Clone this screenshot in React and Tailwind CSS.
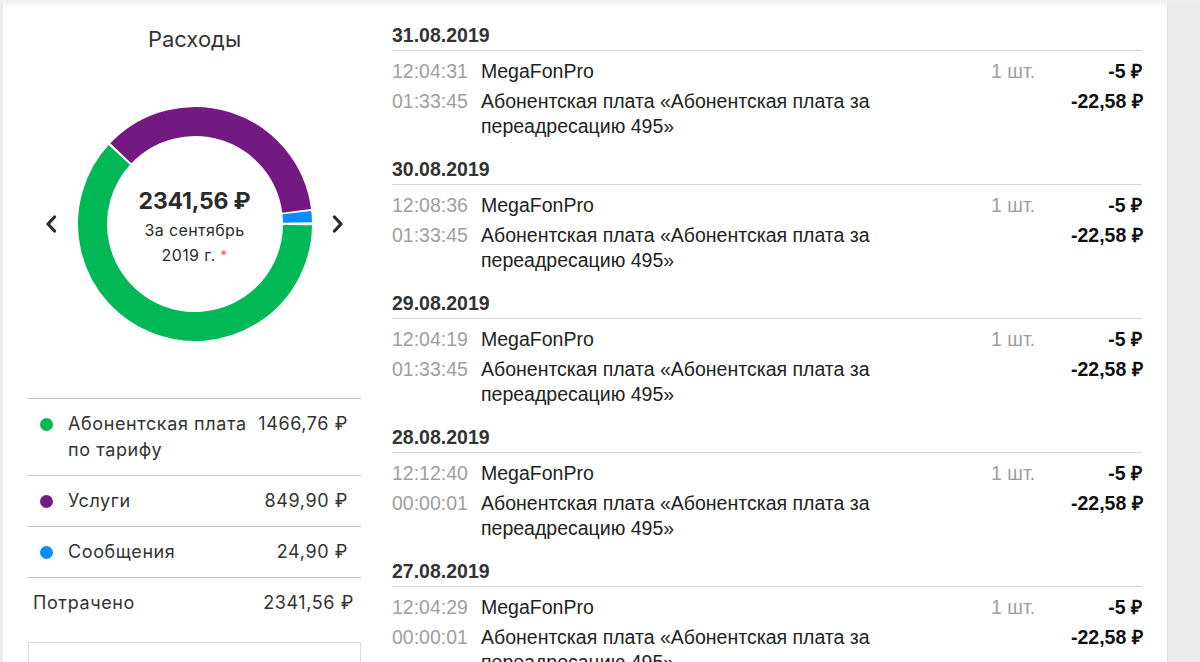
import React from 'react';

const blocks = [
  { date: '31.08.2019', t1: '12:04:31', t2: '01:33:45' },
  { date: '30.08.2019', t1: '12:08:36', t2: '01:33:45' },
  { date: '29.08.2019', t1: '12:04:19', t2: '01:33:45' },
  { date: '28.08.2019', t1: '12:12:40', t2: '00:00:01' },
  { date: '27.08.2019', t1: '12:04:29', t2: '00:00:01' },
];

const legend = [
  { color: 'bg-[#00b956]', label: ['Абонентская плата', 'по тарифу'], value: '1466,76 ₽' },
  { color: 'bg-[#731982]', label: ['Услуги'], value: '849,90 ₽' },
  { color: 'bg-[#0a8cff]', label: ['Сообщения'], value: '24,90 ₽' },
];

// arc path on circle centred at 120,120; angles clockwise from 3 o'clock
function arc(a0, a1, r = 102.5) {
  const rad = (a) => (a * Math.PI) / 180;
  const x0 = 120 + r * Math.cos(rad(a0));
  const y0 = 120 + r * Math.sin(rad(a0));
  const x1 = 120 + r * Math.cos(rad(a1));
  const y1 = 120 + r * Math.sin(rad(a1));
  const large = a1 - a0 > 180 ? 1 : 0;
  return `M ${x0} ${y0} A ${r} ${r} 0 ${large} 1 ${x1} ${y1}`;
}

function Chevron({ dir }) {
  return (
    <svg width="12" height="18" viewBox="0 0 12 18" fill="none">
      <path
        d={dir === 'left' ? 'M9.5 2 L3 9 L9.5 16' : 'M2.5 2 L9 9 L2.5 16'}
        stroke="#2b2b2b"
        strokeWidth="3.2"
        strokeLinecap="round"
        strokeLinejoin="round"
      />
    </svg>
  );
}

function Donut() {
  return (
    <div className="relative w-[240px] h-[240px]">
      <svg width="240" height="240" viewBox="0 0 240 240">
        <path d={arc(0.6, 222.4)} stroke="#00b956" strokeWidth="29" fill="none" />
        <path d={arc(223.6, 352.6)} stroke="#731982" strokeWidth="29" fill="none" />
        <path d={arc(353.6, 359.2)} stroke="#0a8cff" strokeWidth="29" fill="none" />
      </svg>
      <div className="absolute inset-0 flex flex-col items-center justify-center pt-[6px] text-[#2b2b2b]">
        <div className="text-[23px] font-bold leading-[28px] tracking-[-0.2px]">2341,56 ₽</div>
        <div className="text-[16px] leading-[25px] mt-[3px] tracking-[0.4px]">За сентябрь</div>
        <div className="text-[16px] leading-[24px] tracking-[0.4px]">
          2019 г. <span className="text-[#f0525a] text-[13px] align-top">*</span>
        </div>
      </div>
    </div>
  );
}

export default function App() {
  return (
    <div className="relative w-[1200px] h-[662px] overflow-hidden bg-white flex">
      <div className="w-[3px] shrink-0 bg-[#ececec]" />

      {/* left: expenses */}
      <div className="ml-[25px] w-[333px] shrink-0 pt-[24px] text-[#333] font-['Inter','Noto_Sans',sans-serif]">
        <h2 className="text-center text-[22px] leading-[30px] font-normal text-[#333]">Расходы</h2>

        <div className="mt-[50px] grid grid-cols-[1fr_auto_1fr] items-center">
          <div className="flex justify-center"><Chevron dir="left" /></div>
          <Donut />
          <div className="flex justify-center"><Chevron dir="right" /></div>
        </div>

        <div className="mt-[54px] border-t border-[#c4c4c4] text-[18px] leading-[26px] tracking-[0.6px]">
          {legend.map((l) => (
            <div key={l.value} className="flex items-start py-[12px] pl-[12px] pr-[13px] border-b border-[#c4c4c4]">
              <span className={`mt-[7px] w-[13px] h-[13px] rounded-full shrink-0 ${l.color}`} />
              <div className="ml-[15px] flex-1">
                {l.label.map((s) => (
                  <div key={s} className="whitespace-nowrap">{s}</div>
                ))}
              </div>
              <div className="whitespace-nowrap">{l.value}</div>
            </div>
          ))}
          <div className="flex justify-between py-[12px] pl-[5px] pr-[7px]">
            <span>Потрачено</span>
            <span>2341,56 ₽</span>
          </div>
          <div className="mt-[14px] h-[60px] border-[1.5px] border-[#dcdcdc]" />
        </div>
      </div>

      {/* right: details */}
      <div className="ml-[31px] w-[750px] shrink-0 pt-[23px] font-['Liberation_Sans',Arial,sans-serif] text-[19.5px] leading-[25px]">
        {blocks.map((b) => (
          <div key={b.date} className="mb-[18px]">
            <div className="font-bold text-[#333] pb-[2px] border-b border-[#d6d6d6]">{b.date}</div>
            <div className="pt-[8px] flex flex-col gap-[5px]">
              <div className="flex items-start">
                <span className="w-[89px] shrink-0 text-[#9e9e9e]">{b.t1}</span>
                <span className="flex-1 text-[#222]">MegaFonPro</span>
                <span className="w-[80px] text-[#9e9e9e]">1 шт.</span>
                <span className="w-[71px] text-right font-bold text-[#111]">-5 ₽</span>
              </div>
              <div className="flex items-start">
                <span className="w-[89px] shrink-0 text-[#9e9e9e]">{b.t2}</span>
                <span className="flex-1 text-[#222]">Абонентская плата «Абонентская плата за переадресацию 495»</span>
                <span className="w-[80px]" />
                <span className="w-[71px] text-right font-bold text-[#111] whitespace-nowrap">-22,58 ₽</span>
              </div>
            </div>
          </div>
        ))}
      </div>

      <div className="ml-[25px] flex-1 bg-[#ebebeb] border-l border-[#e0e0e0]" />

      <div className="pointer-events-none absolute top-0 inset-x-0 h-[8px] bg-linear-to-b from-[#efefef] to-transparent" />
    </div>
  );
}
